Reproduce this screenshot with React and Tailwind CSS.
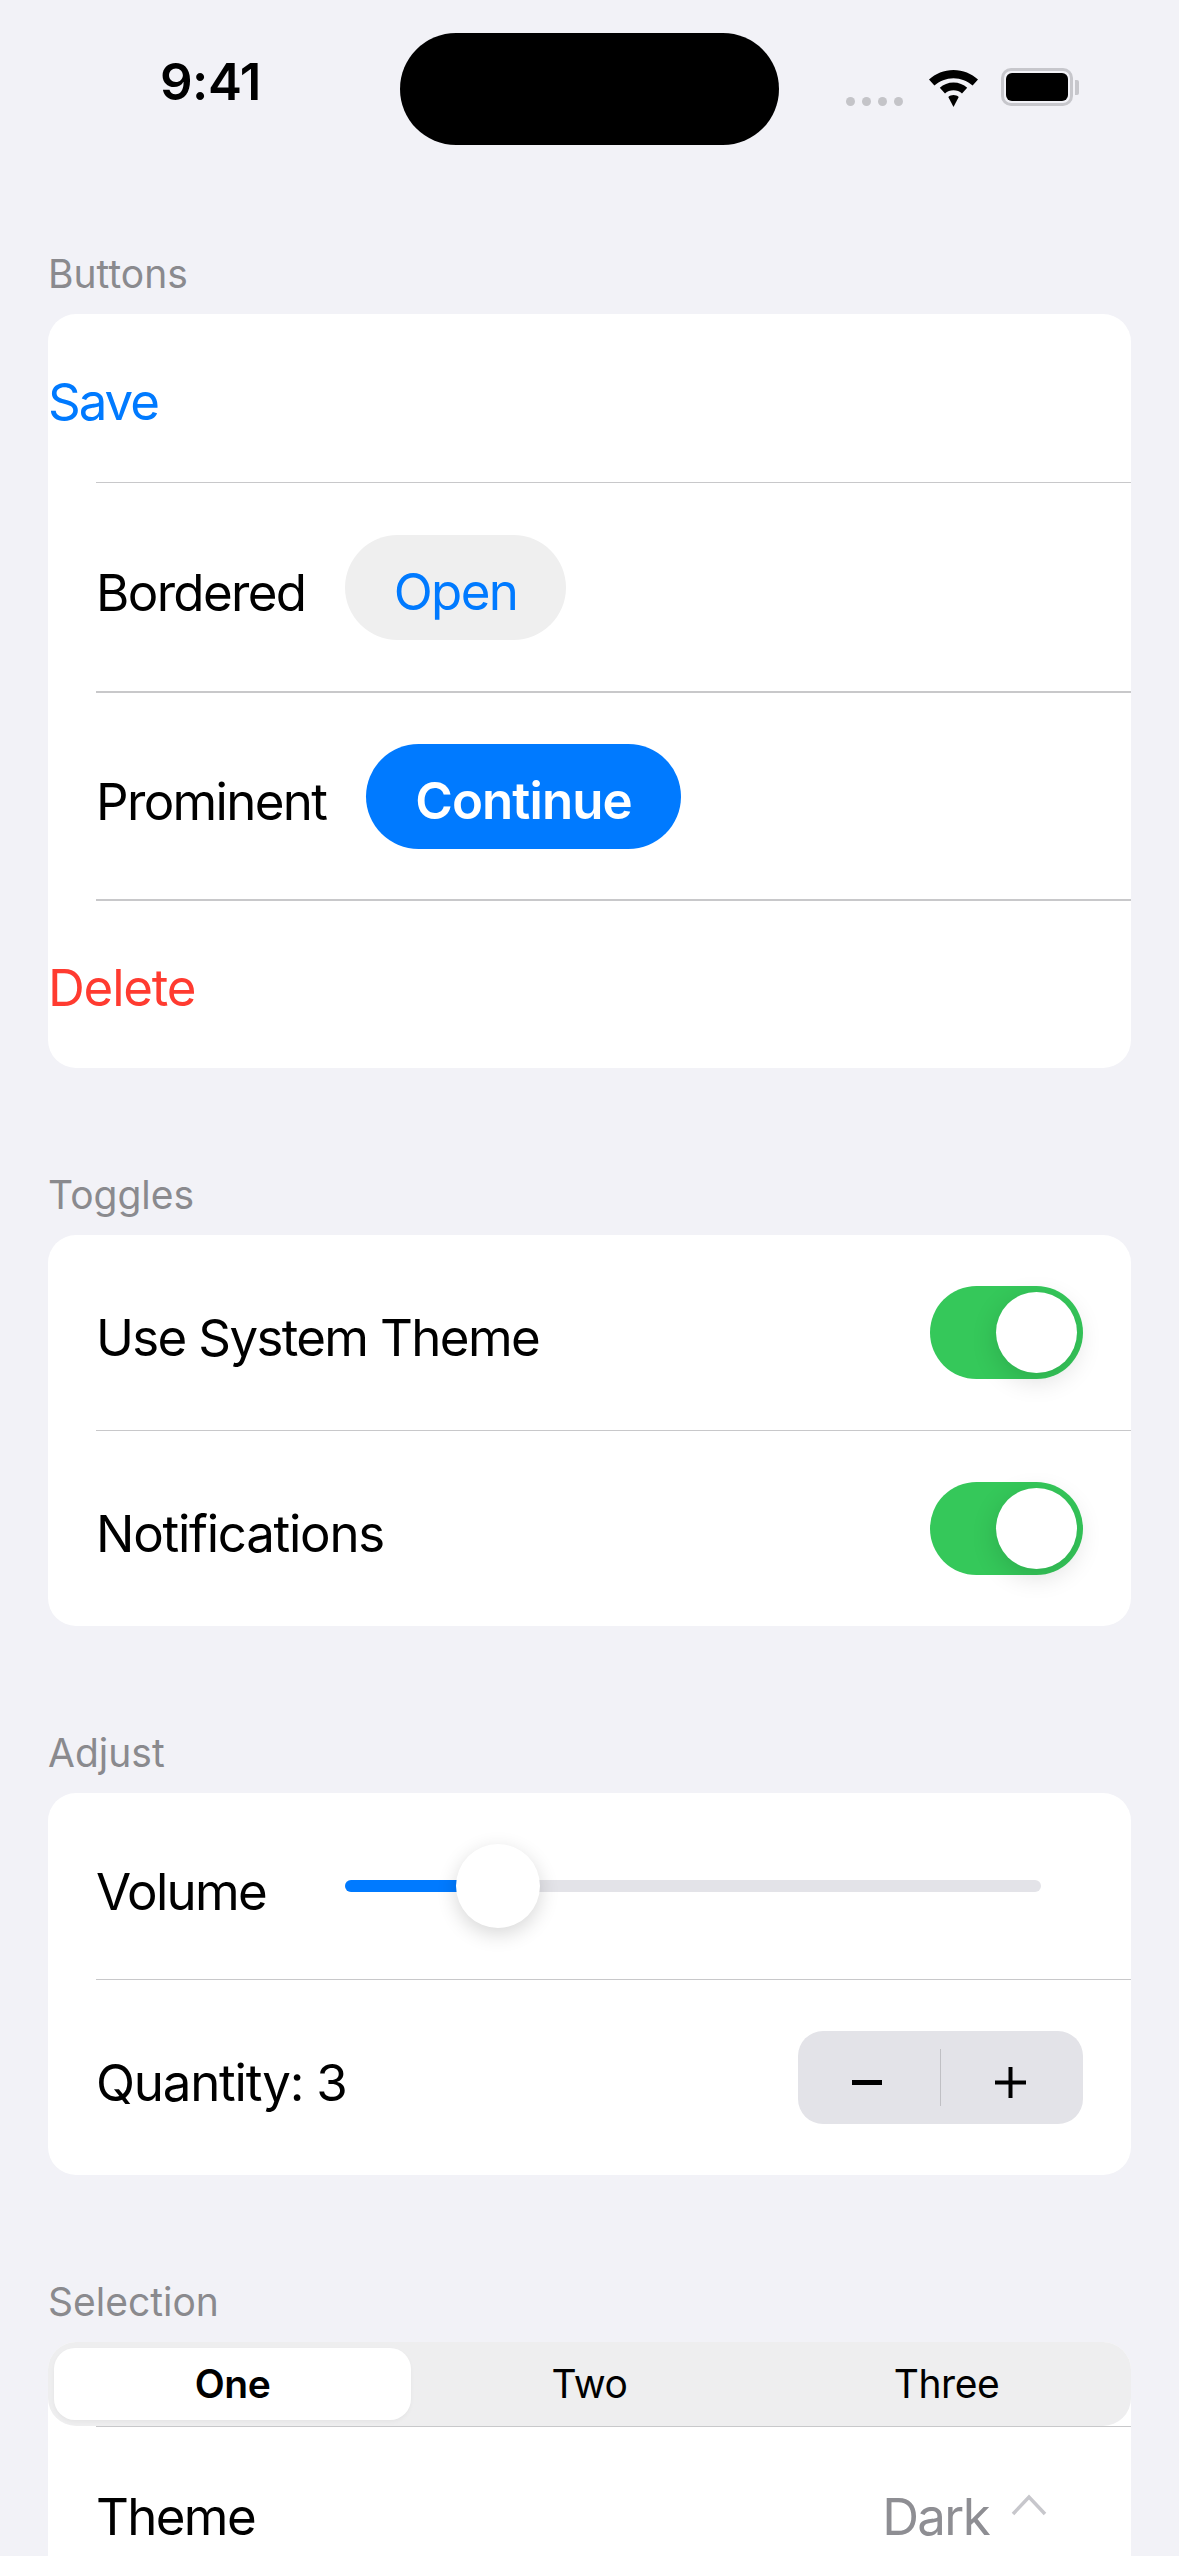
import React from 'react';

const Divider = ({ thin }) => <div className={thin ? 'ml-[48px] h-[1px] bg-[#c8c8ca]' : 'ml-[48px] h-[2px] bg-[#c8c8ca]'} />;

const Section = ({ title, children }) => (
  <section className="mx-[48px] mb-[103px]">
    <h2 className="h-[48px] mb-[16px] text-[39px] leading-[48px] text-[#8a8a8e] font-normal tracking-normal">{title}</h2>
    {children}
  </section>
);

const Card = ({ children }) => <div className="bg-white rounded-[28px]">{children}</div>;

const Toggle = () => (
  <div className="w-[153px] h-[93px] rounded-full bg-[#35c85a] p-[6px] flex justify-end">
    <div className="w-[81px] h-[81px] rounded-full bg-white shadow-[0_7px_27px_rgba(0,0,0,0.14)]" />
  </div>
);

const WifiIcon = () => (
  <svg width="49" height="37" viewBox="0 0 49 37" fill="none">
    <path d="M24.5 0C34 0 42.5 3.6 49 9.6L43.6 15.6C38.5 11 31.8 8.2 24.5 8.2S10.500 11 5.400 15.600L0 9.600C6.500 3.600 15 0 24.500 0Z" fill="black" />
    <path d="M24.500 12.500C29.800 12.500 34.600 14.500 38.200 17.800L33 23.500C30.700 21.500 27.700 20.300 24.500 20.300S18.300 21.500 16 23.500L10.800 17.800C14.400 14.500 19.200 12.500 24.500 12.500Z" fill="black" />
    <path d="M24.500 25C26.500 25 28.300 25.700 29.700 26.900L24.500 37L19.300 26.900C20.700 25.700 22.500 25 24.500 25Z" fill="black" />
  </svg>
);

const Battery = () => (
  <div className="flex items-center ml-[23px]">
    <div className="w-[72px] h-[38px] rounded-[10px] border-[3px] border-[#c7c7cc] p-[2px]">
      <div className="w-full h-full rounded-[6px] bg-black" />
    </div>
    <div className="w-[4px] h-[15px] ml-[2px] rounded-r-[2px] bg-[#c7c7cc]" />
  </div>
);

const StatusBar = () => (
  <div className="flex items-start pt-[33px] mb-[105px] h-[145px]">
    <div className="ml-[160px] w-[240px] pt-[21px] text-[51px] leading-[56px] font-semibold text-black tracking-[-0.5px]">9:41</div>
    <div className="w-[379px] h-[112px] rounded-full bg-black shrink-0" />
    <div className="ml-[67px] mt-[35px] flex items-start">
      <div className="flex gap-[7px] mt-[29px]">
        {[0, 1, 2, 3].map((i) => (
          <div key={i} className="w-[9px] h-[9px] rounded-full bg-[#c4c4c8]" />
        ))}
      </div>
      <div className="ml-[26px] mt-[2px] flex">
        <WifiIcon />
      </div>
      <Battery />
    </div>
  </div>
);

export default function App() {
  return (
    <div className="w-[1179px] h-[2556px] overflow-hidden bg-[#f2f2f7] text-black text-[51px] tracking-[-1.65px] font-['Inter',sans-serif]">
      <StatusBar />

      <Section title="Buttons">
        <Card>
          <div className="h-[168px] flex items-center pt-[9px] text-[#007aff] tracking-[-2px]">Save</div>
          <Divider thin />
          <div className="h-[208px] flex items-center pl-[48px]">
            <span className="w-[249px] pt-[12px]">Bordered</span>
            <button className="w-[221px] h-[105px] rounded-full bg-[#efefef] text-[#007aff] pt-[10px]">Open</button>
          </div>
          <Divider />
          <div className="h-[206px] flex items-center pl-[48px]">
            <span className="w-[270px] pt-[12px]">Prominent</span>
            <button className="w-[315px] h-[105px] rounded-full bg-[#007aff] text-white font-semibold tracking-[-0.9px] pt-[10px]">Continue</button>
          </div>
          <Divider />
          <div className="h-[167px] flex items-center pt-[7px] text-[#ff3b30] tracking-[-1.2px]">Delete</div>
        </Card>
      </Section>

      <Section title="Toggles">
        <Card>
          <div className="h-[195px] flex items-center justify-between px-[48px]">
            <span className="pt-[12px]">Use System Theme</span>
            <Toggle />
          </div>
          <Divider thin />
          <div className="h-[195px] flex items-center justify-between px-[48px]">
            <span className="pt-[12px] tracking-[-1.25px]">Notifications</span>
            <Toggle />
          </div>
        </Card>
      </Section>

      <Section title="Adjust">
        <Card>
          <div className="h-[186px] flex items-center pl-[48px]">
            <span className="w-[249px] pt-[12px]">Volume</span>
            <div className="relative w-[696px] h-[12px] rounded-full bg-[#e3e3e8] flex">
              <div className="w-[130px] h-full rounded-l-full bg-[#007aff]" />
              <div className="absolute left-[111px] top-[-36px] w-[84px] h-[84px] rounded-full bg-white shadow-[0_6px_20px_rgba(0,0,0,0.16)]" />
            </div>
          </div>
          <Divider thin />
          <div className="h-[195px] flex items-center justify-between px-[48px]">
            <span className="pt-[12px] tracking-[-1.2px]">Quantity: 3</span>
            <div className="w-[285px] h-[93px] rounded-[25px] bg-[#e3e3e8] flex items-center">
              <div className="w-[142px] pr-[4px] pt-[9px] flex justify-center">
                <div className="w-[30px] h-[5px] bg-black" />
              </div>
              <div className="w-[1px] h-[57px] bg-[#c0c0c4]" />
              <div className="w-[142px] pr-[4px] pt-[9px] flex justify-center">
                <svg width="31" height="31" viewBox="0 0 31 31"><path d="M15.500 0V31M0 15.500H31" stroke="black" strokeWidth="4" /></svg>
              </div>
            </div>
          </div>
        </Card>
      </Section>

      <section className="mx-[48px]">
        <h2 className="h-[48px] mb-[16px] text-[39px] leading-[48px] text-[#8a8a8e] font-normal tracking-normal">Selection</h2>
        <div className="bg-white rounded-t-[28px]">
          <div className="h-[84px] rounded-[28px] bg-[#eeeeef] p-[6px] flex text-[39px] tracking-[-0.4px]">
            <div className="w-[357px] rounded-[21px] bg-white shadow-[0_2px_4px_rgba(0,0,0,0.04)] flex items-center justify-center font-semibold">One</div>
            <div className="w-[357px] flex items-center justify-center">Two</div>
            <div className="flex-1 flex items-center justify-center">Three</div>
          </div>
          <Divider thin />
          <div className="h-[169px] flex items-center justify-between pl-[48px] pr-[84px]">
            <span className="pt-[12px]">Theme</span>
            <div className="flex items-center text-[#8e8e93]">
              <span className="pt-[12px]">Dark</span>
              <svg className="ml-[22px] mb-[13px]" width="36" height="22" viewBox="0 0 36 22" fill="none"><path d="M2 20L18 3L34 20" stroke="#c7c7cc" strokeWidth="3.500" /></svg>
            </div>
          </div>
        </div>
      </section>
    </div>
  );
}
